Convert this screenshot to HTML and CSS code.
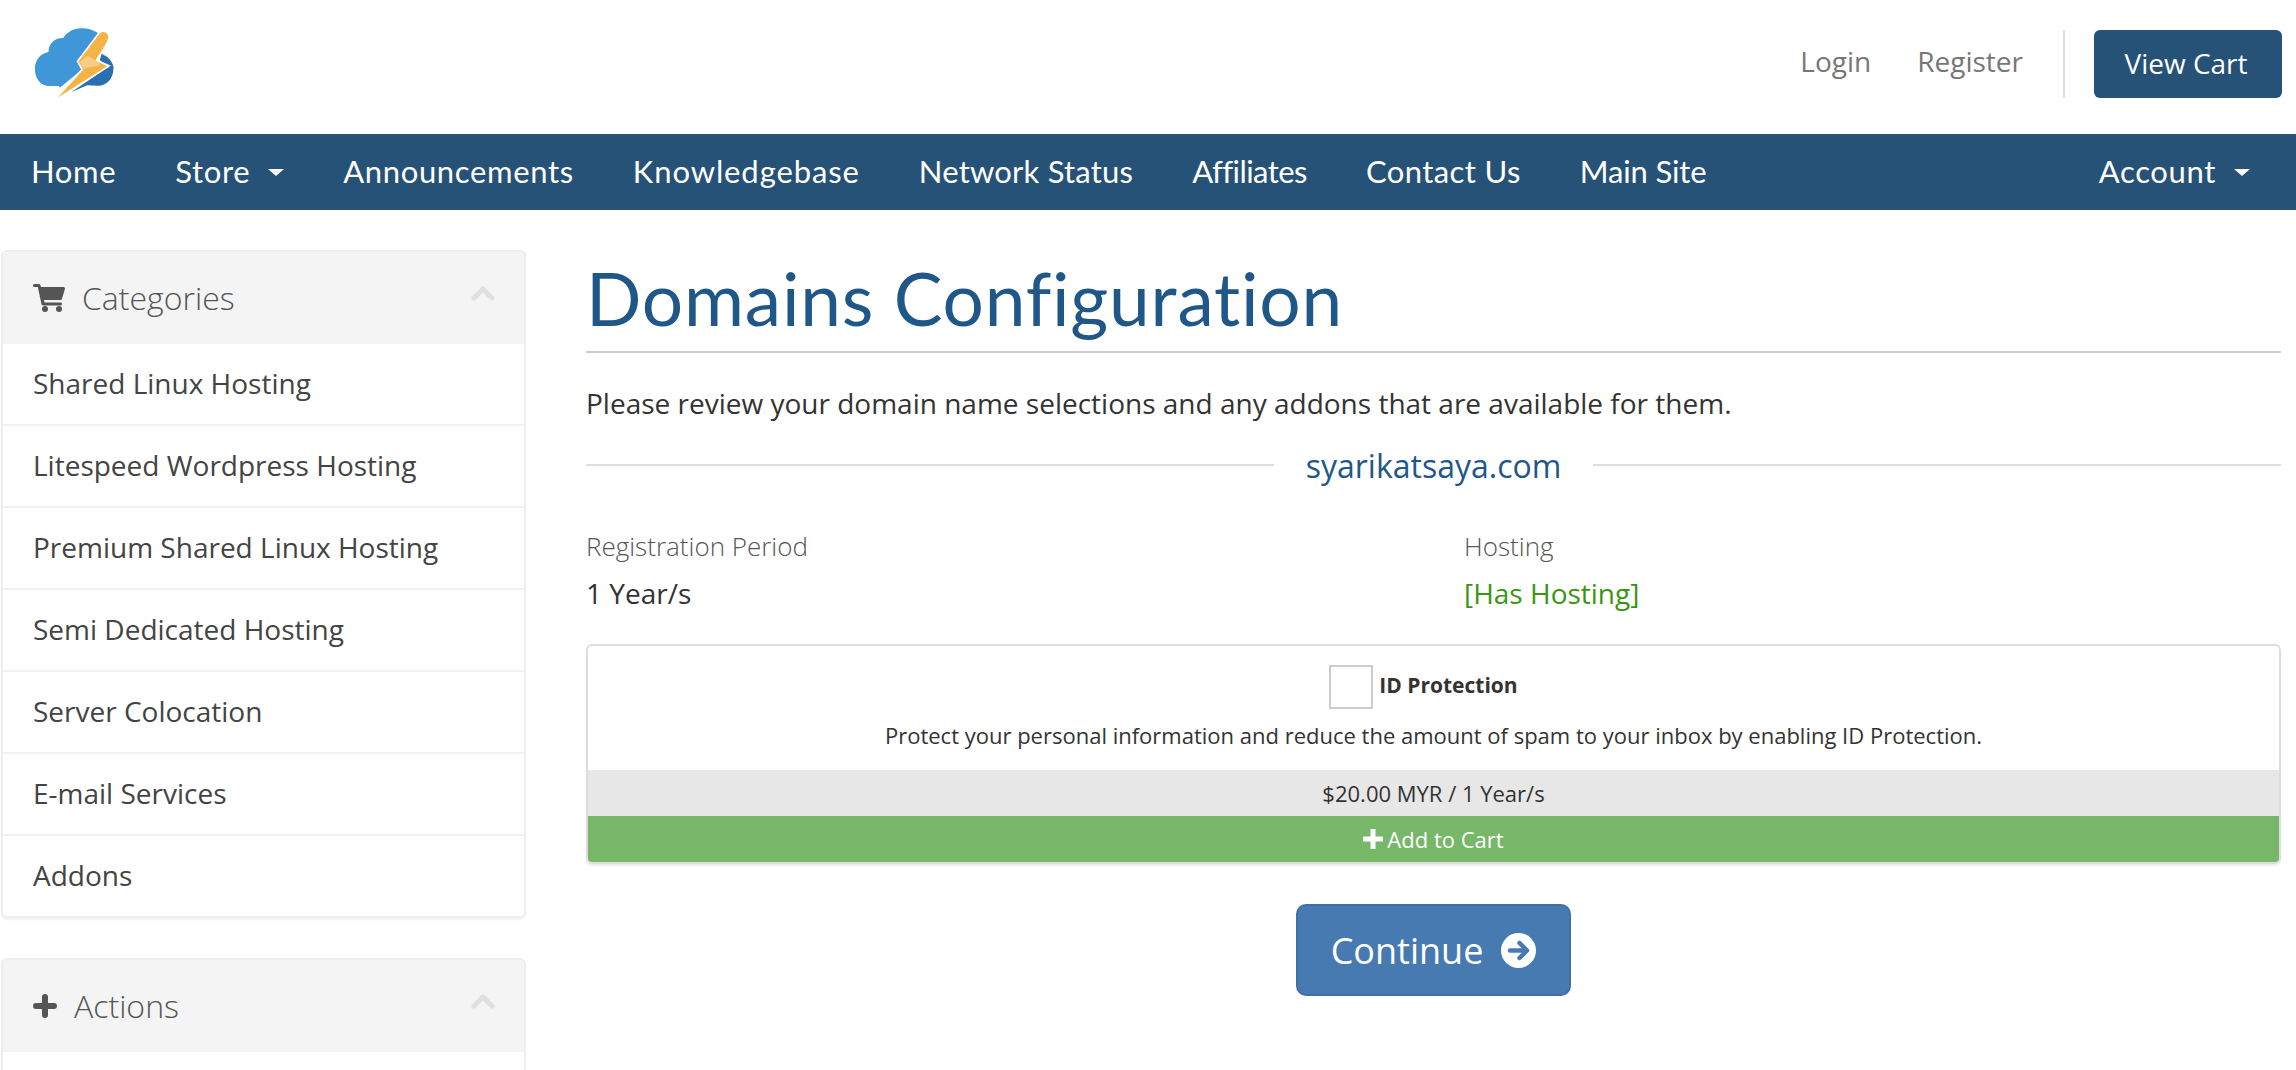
FILE: index.html
```html
<!DOCTYPE html>
<html lang="en">
<head>
<meta charset="utf-8">
<title>Domains Configuration</title>
<link rel="stylesheet" href="styles.css">
</head>
<body>
<header class="topbar">
  <a class="logo" href="#">
    <svg width="82" height="75" viewBox="100 80 245 225">
      <path fill="#2a6fb2" d="M305 160C330 170 342 190 341 205C340 235 320 256 295 256L262 255L215 275L325 200L300 180Z"/>
      <path fill="#3f97d8" d="M150 257C120 257 105 232 105 205C105 178 125 158 146 155C146 130 165 112 190 113C205 92 225 83 250 84C270 85 285 92 298 100L235 182L262 195L180 262L178 257Z"/>
      <path fill="#f3b445" stroke="#fff" stroke-width="5" d="M300 95C315 88 330 95 327 115C322 135 305 155 290 180L328 197L160 303L247 208L233 183Z"/>
      <path fill="#f6cd85" d="M262 167L292 182L300 195L250 205L240 184Z"/>
    </svg>
  </a>
  <div class="top-links">
    <a class="top-link login" href="#">Login</a>
    <a class="top-link" href="#">Register</a>
    <span class="divider"></span>
    <a class="cart-btn" href="#">View Cart</a>
  </div>
</header>
<nav class="mainnav">
  <a href="#">Home</a>
  <a href="#">Store<i class="caret"></i></a>
  <a href="#">Announcements</a>
  <a class="sp-wide" href="#">Knowledgebase</a>
  <a class="sp-narrow" href="#">Network Status</a>
  <a class="sp-tight" href="#">Affiliates</a>
  <a class="sp-contact" href="#">Contact Us</a>
  <a class="sp-tighter" href="#">Main Site</a>
  <a class="nav-right" href="#">Account<i class="caret"></i></a>
</nav>
<div class="page">
  <aside class="sidebar">
    <section class="panel">
      <div class="panel-head">
        <svg class="head-icon" width="32" height="28" viewBox="0 0 32 28"><path fill="#555" d="M0 1.500C0 .7.7 0 1.500 0H6c.7 0 1.200.4 1.400 1L8 3h22.500c1 0 1.700 1 1.400 1.900l-3 10c-.2.700-.8 1.100-1.500 1.100H11l.5 2.500h16c.8 0 1.500.7 1.500 1.500s-.7 1.500-1.500 1.500H10c-.7 0-1.300-.5-1.500-1.200L4.800 3H1.500C.7 3 0 2.300 0 1.500Z"/><circle fill="#555" cx="12" cy="25" r="3"/><circle fill="#555" cx="26" cy="25" r="3"/></svg>
        <h3>Categories</h3>
        <svg class="chev" width="24" height="16" viewBox="0 0 24 16"><path fill="none" stroke="#e0e0e0" stroke-width="5" stroke-linecap="round" stroke-linejoin="round" d="M3 13 12 4l9 9"/></svg>
      </div>
      <ul class="panel-list">
        <li>Shared Linux Hosting</li>
        <li>Litespeed Wordpress Hosting</li>
        <li>Premium Shared Linux Hosting</li>
        <li>Semi Dedicated Hosting</li>
        <li>Server Colocation</li>
        <li>E-mail Services</li>
        <li>Addons</li>
      </ul>
    </section>
    <section class="panel">
      <div class="panel-head">
        <svg class="head-icon" width="24" height="24" viewBox="0 0 24 24"><path fill="none" stroke="#555" stroke-width="6" stroke-linecap="round" d="M12 3v18M3 12h18"/></svg>
        <h3>Actions</h3>
        <svg class="chev" width="24" height="16" viewBox="0 0 24 16"><path fill="none" stroke="#e0e0e0" stroke-width="5" stroke-linecap="round" stroke-linejoin="round" d="M3 13 12 4l9 9"/></svg>
      </div>
      <div class="panel-empty"></div>
    </section>
  </aside>
  <main class="content">
    <h1>Domains Configuration</h1>
    <p class="intro">Please review your domain name selections and any addons that are available for them.</p>
    <div class="domain-sep"><span>syarikatsaya.com</span></div>
    <div class="details">
      <div>
        <div class="label">Registration Period</div>
        <div class="value">1 Year/s</div>
      </div>
      <div>
        <div class="label">Hosting</div>
        <div class="value green">[Has Hosting]</div>
      </div>
    </div>
    <div class="addon">
      <div class="addon-body">
        <div class="addon-title"><span class="check"></span><strong>ID Protection</strong></div>
        <p>Protect your personal information and reduce the amount of spam to your inbox by enabling ID Protection.</p>
      </div>
      <div class="addon-price">$20.00 MYR / 1 Year/s</div>
      <div class="addon-add">
        <svg width="20" height="20" viewBox="0 0 20 20"><path fill="none" stroke="#fff" stroke-width="5" d="M10 0v20M0 10h20"/></svg>
        Add to Cart
      </div>
    </div>
    <div class="actions">
      <a class="continue" href="#">Continue
        <svg width="35" height="35" viewBox="0 0 35 35"><circle cx="17.500" cy="17.500" r="17.500" fill="#fff"/><path fill="none" stroke="#487ab2" stroke-width="4.500" stroke-linecap="round" stroke-linejoin="round" d="M9 17.500h16M18.500 10l7.500 7.500-7.500 7.500"/></svg>
      </a>
    </div>
  </main>
</div>
</body>
</html>
```
FILE: styles.css
```css
* { box-sizing: border-box; }
html, body { margin: 0; height: 1070px; overflow: hidden; background: #fff; }
body { font-family: "Open Sans", sans-serif; font-size: 28px; color: #333; }
a { text-decoration: none; color: inherit; }

.topbar { height: 134px; display: flex; justify-content: space-between; align-items: flex-start; padding: 27px 14px 0 33px; }
.logo { display: block; height: 75px; }
.logo svg { display: block; }
.top-links { display: flex; align-items: center; margin-top: 3px; height: 68px; font-size: 28px; color: #777; }
.top-link { margin-left: 46px; padding-bottom: 6px; }
.divider { width: 2px; height: 68px; background: #ddd; margin: 0 29px 0 40px; }
.cart-btn { width: 188px; height: 68px; padding: 0 4px 2px 0; border-radius: 6px; background: #265277; color: #fff; display: flex; align-items: center; justify-content: center; }

.mainnav { height: 76px; background: #265277; display: flex; align-items: center; padding: 0 46px 2px 31px; gap: 59px; font-family: "Lato", sans-serif; font-size: 31px; color: #fff; letter-spacing: 0.65px; }
.mainnav a { display: flex; align-items: center; }
.mainnav .sp-wide { letter-spacing: 0.9px; }
.mainnav .sp-narrow { letter-spacing: 0.2px; }
.mainnav .sp-tight { letter-spacing: -0.55px; }
.mainnav .sp-contact { letter-spacing: 0.4px; }
.mainnav .sp-tighter { letter-spacing: -0.15px; }
.nav-right { margin-left: auto; }
.caret { display: block; width: 0; height: 0; margin-left: 18px; margin-top: 3px; border-left: 8px solid transparent; border-right: 8px solid transparent; border-top: 7px solid #fff; }

.page { display: grid; grid-template-columns: 525px 1fr; column-gap: 60px; padding: 40px 15px 0 1px; }
.panel { background: #fff; border: 2px solid #eee; border-radius: 6px; box-shadow: 0 2px 2px rgba(0,0,0,.05); margin-bottom: 40px; overflow: hidden; }
.panel-head { height: 92px; background: #f4f4f4; display: flex; align-items: center; padding: 0 29px 0 30px; color: #555; }
.panel-head h3 { margin: 0 0 0 17px; flex: 1; font-size: 32px; font-weight: 300; line-height: 1; }
.chev { margin-top: -10px; }
.panel-list { list-style: none; margin: 0; padding: 0; font-size: 28px; color: #444; }
.panel-list li { height: 82px; padding: 0 0 2px 30px; display: flex; align-items: center; border-bottom: 2px solid #f2f2f2; }
.panel-list li:last-child { border-bottom: 0; height: 80px; }
.panel-empty { height: 60px; }

.content { min-width: 0; }
h1 { margin: 0; height: 103px; border-bottom: 2px solid #ccc; font-family: "Lato", sans-serif; font-weight: 400; font-size: 73px; line-height: 96px; letter-spacing: 0.8px; color: #1f5788; }
.intro { margin: 31px 0 0; line-height: 38px; color: #333; }
.domain-sep { display: flex; align-items: center; margin-top: 24px; height: 38px; font-size: 32px; color: #1f5788; }
.domain-sep::before, .domain-sep::after { content: ""; flex: 1; height: 2px; background: #ddd; }
.domain-sep span { padding: 0 32px; }
.details { display: grid; grid-template-columns: 878px 1fr; margin-top: 43px; }
.label { font-weight: 300; font-size: 26px; line-height: 38px; color: #555; }
.value { margin-top: 9px; line-height: 38px; color: #333; }
.green { color: #3c9512; }
.addon { margin-top: 32px; border: 2px solid #ddd; border-radius: 6px; overflow: hidden; text-align: center; font-size: 22px; box-shadow: 0 2px 2px rgba(0,0,0,.08); }
.addon-body { height: 124px; padding-top: 19px; }
.addon-title { display: flex; justify-content: center; align-items: flex-start; height: 44px; padding-right: 20px; }
.check { width: 44px; height: 44px; border: 2px solid #ccc; margin-right: 6px; }
.addon-title strong { line-height: 40px; font-weight: 700; font-size: 21px; }
.addon-body p { margin: 10px 0 0; line-height: 32px; color: #333; }
.addon-price { height: 46px; line-height: 46px; background: #e7e7e7; }
.addon-add { height: 46px; background: #76b768; color: #fff; display: flex; align-items: center; justify-content: center; gap: 4px; }
.actions { display: flex; justify-content: center; margin-top: 40px; }
.continue { width: 275px; height: 92px; border: 2px solid #3f70a6; border-radius: 10px; background: #487ab2; color: #fff; font-size: 36px; display: flex; align-items: center; justify-content: center; gap: 18px; }
```
